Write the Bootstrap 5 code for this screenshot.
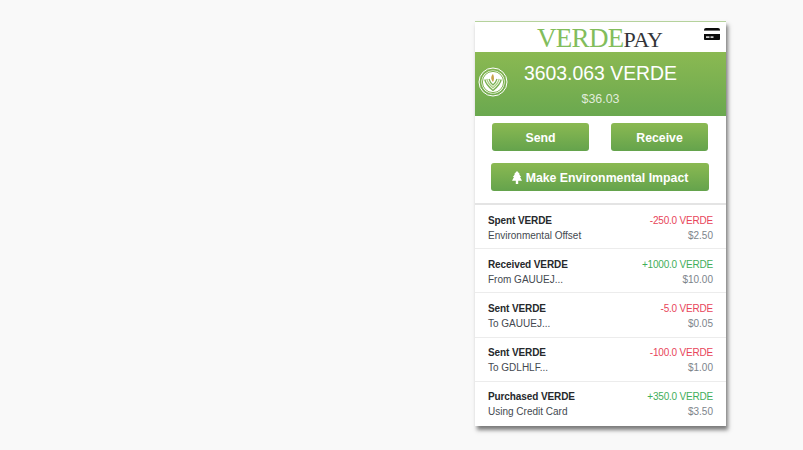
<!DOCTYPE html>
<html lang="en">
<head>
  <meta charset="UTF-8">
  <meta name="viewport" content="width=device-width, initial-scale=1.0">
  <title>Verde Pay</title>
  <link href="https://cdn.jsdelivr.net/npm/bootstrap@5.3.1/dist/css/bootstrap.min.css" rel="stylesheet">
  <style>
    html, body {
      height: 100%;
    }
    body {
      background-color: #f9f9f9;
      font-family: "Liberation Sans", Arial, sans-serif;
    }
    .stage {
      padding: 21px 0 0 475px;
    }
    .phone {
      position: relative;
      z-index: 1;
      width: 251px;
      height: 405px;
      background-color: #fff;
      border-top: 1px solid #b5d29c;
      box-shadow: 2px 4px 4px rgba(70, 70, 70, .7);
    }
    .topbar {
      height: 30px;
      padding: 0 6px 0 62px;
    }
    .brand-word {
      font-family: "Liberation Serif", serif;
      line-height: 30px;
      margin-top: 1px;
      white-space: nowrap;
    }
    .brand-verde {
      color: #82bd5c;
      font-size: 27px;
      letter-spacing: -.7px;
    }
    .brand-pay {
      color: #333438;
      font-size: 22px;
      letter-spacing: -.3px;
    }
    .card-glyph {
      margin-top: 5.5px;
    }
    .hero {
      height: 64px;
      color: #fff;
      background: linear-gradient(#8bb952, #6aa84f);
    }
    .hero-logo {
      left: 3px;
      top: 15px;
    }
    .balance {
      font-size: 19.4px;
      line-height: 22px;
      padding-top: 10px;
    }
    .usd {
      font-size: 12.4px;
      line-height: 15px;
      margin-top: 8px;
      color: rgba(255, 255, 255, .8);
    }
    .actions {
      height: 87px;
      padding: 7px 18px 0 16px;
    }
    .btn-verde {
      color: #fff;
      font-size: 12.3px;
      font-weight: 700;
      height: 28px;
      line-height: 28px;
      padding: 1px 0 0;
      border: 0;
      border-radius: 3px;
      background: linear-gradient(#8bb952, #64a34c);
    }
    .btn-half {
      width: 97px;
      margin-left: 1px;
    }
    .btn-wide {
      width: 218px;
      margin-top: 12px;
    }
    .tx-list {
      border-top: 2px solid #e4e4e4;
      font-size: 10px;
      line-height: 15px;
    }
    .tx-list .list-group-item {
      height: 44.2px;
      padding: 7.5px 13px 0 13px;
      border-color: #ececec;
      color: #444950;
    }
    .tx-name {
      color: #26292c;
      font-weight: 700;
      letter-spacing: -.1px;
    }
    .tx-neg {
      color: #e8455a;
      letter-spacing: -.2px;
    }
    .tx-pos {
      color: #3fae5a;
      letter-spacing: -.2px;
    }
    .tx-usd {
      color: #7d848b;
    }
  </style>
</head>
<body>
  <div class="stage">
    <div class="phone">
      <!-- Header -->
      <div class="topbar d-flex justify-content-between">
        <div class="brand-word"><span class="brand-verde">VERDE</span><span class="brand-pay">PAY</span></div>
        <svg class="card-glyph" width="16" height="12.500" viewBox="0 0 16 12.500" aria-hidden="true">
          <rect width="16" height="12.500" rx="2" fill="#0b0b0b"/>
          <rect y="2.600" width="16" height="3.400" fill="#fff"/>
          <rect x="2" y="8.400" width="3.500" height="1.400" fill="#fff"/>
          <rect x="6.500" y="8.400" width="3" height="1.400" fill="#fff"/>
        </svg>
      </div>

      <!-- Balance -->
      <div class="hero position-relative text-center">
        <svg class="hero-logo position-absolute" width="30" height="30" viewBox="0 0 30 30" aria-hidden="true">
          <circle cx="15" cy="15" r="14" fill="none" stroke="#fff" stroke-width="1"/>
          <circle cx="15" cy="15" r="11.600" fill="#fff"/>
          <circle cx="15" cy="15" r="10.600" fill="none" stroke="#7fb24f" stroke-width="1"/>
          <path d="M6.800 12.500c1 5 4.500 8 8.200 11 3.700-3 7.200-6 8.200-11" fill="none" stroke="#79b052" stroke-width="1.300"/>
          <path d="M8.800 11.800c.8 4 3.400 6.500 6.200 9 2.800-2.500 5.400-5 6.200-9" fill="none" stroke="#a9cd7f" stroke-width="1.300"/>
          <path d="M11 12c.7 2.700 2.200 4.400 4 6 1.800-1.600 3.300-3.300 4-6" fill="none" stroke="#79b052" stroke-width="1.200"/>
          <path d="M15 7c-2.200 2.200-2.500 5 0 8 1.300-2.200 1.300-5.300 0-8z" fill="#c8a24a"/>
        </svg>
        <div class="balance">3603.063 VERDE</div>
        <div class="usd">$36.03</div>
      </div>

      <!-- Actions -->
      <div class="actions">
        <div class="d-flex justify-content-between">
          <button type="button" class="btn btn-verde btn-half">Send</button>
          <button type="button" class="btn btn-verde btn-half">Receive</button>
        </div>
        <button type="button" class="btn btn-verde btn-wide d-flex justify-content-center align-items-center gap-1">
          <svg width="10" height="13" viewBox="0 0 10 13" aria-hidden="true">
            <path d="M5 0 8 3.200H7L9.200 6H8L10 9.800H6.200V13H3.800V9.800H0L2 6H.8L3 3.200H2z" fill="#fff"/>
          </svg>
          Make Environmental Impact
        </button>
      </div>

      <!-- Transactions -->
      <div class="tx-list list-group list-group-flush">
        <div class="list-group-item">
          <div class="d-flex justify-content-between"><span class="tx-name">Spent VERDE</span><span class="tx-neg">-250.0 VERDE</span></div>
          <div class="d-flex justify-content-between"><span>Environmental Offset</span><span class="tx-usd">$2.50</span></div>
        </div>
        <div class="list-group-item">
          <div class="d-flex justify-content-between"><span class="tx-name">Received VERDE</span><span class="tx-pos">+1000.0 VERDE</span></div>
          <div class="d-flex justify-content-between"><span>From GAUUEJ...</span><span class="tx-usd">$10.00</span></div>
        </div>
        <div class="list-group-item">
          <div class="d-flex justify-content-between"><span class="tx-name">Sent VERDE</span><span class="tx-neg">-5.0 VERDE</span></div>
          <div class="d-flex justify-content-between"><span>To GAUUEJ...</span><span class="tx-usd">$0.05</span></div>
        </div>
        <div class="list-group-item">
          <div class="d-flex justify-content-between"><span class="tx-name">Sent VERDE</span><span class="tx-neg">-100.0 VERDE</span></div>
          <div class="d-flex justify-content-between"><span>To GDLHLF...</span><span class="tx-usd">$1.00</span></div>
        </div>
        <div class="list-group-item">
          <div class="d-flex justify-content-between"><span class="tx-name">Purchased VERDE</span><span class="tx-pos">+350.0 VERDE</span></div>
          <div class="d-flex justify-content-between"><span>Using Credit Card</span><span class="tx-usd">$3.50</span></div>
        </div>
      </div>
    </div>
  </div>

  <script src="https://cdn.jsdelivr.net/npm/bootstrap@5.3.1/dist/js/bootstrap.bundle.min.js"></script>
</body>
</html>
